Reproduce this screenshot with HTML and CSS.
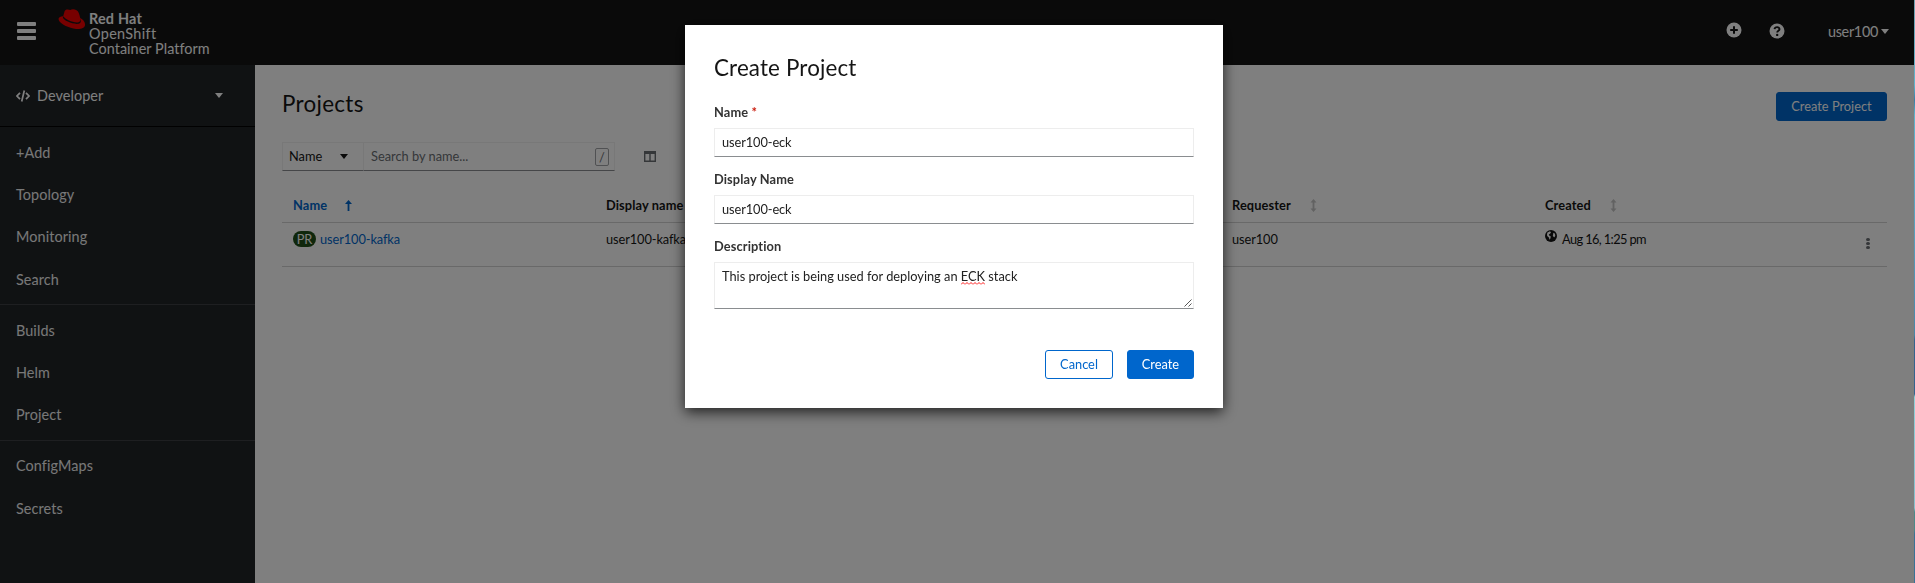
FILE: index.html
```html
<!DOCTYPE html>
<html lang="en">
<head>
<meta charset="utf-8">
<title>Projects</title>
<link rel="stylesheet" href="styles.css">
</head>
<body>
<div class="page">
  <header class="masthead">
    <div class="burger"><i></i><i></i><i></i></div>
    <div class="brand">
      <svg class="hat" viewBox="0 0 28 21" width="28" height="21">
        <path fill="#e00" d="M6.6 2.2C7.4.3 9.2.1 10.8.7l1.600.4C13.800 0 16.500.1 18.500 1.300c2 1.100 2.900 3.500 3.700 7.700 2.700 1.400 5 3.900 4.900 6.700-.2 3.500-4.600 4.600-9 4.200C11.400 19.200 1.600 15.300.6 10.600.2 8.500 2 7.400 5.200 7.300z"/>
        <path fill="#151515" d="M5.200 7.300C7.500 10.700 16 14.300 20.600 13.200c1.400-.4 2-1.300 1.600-4.200l.5 2.300c.6 2.700-1.200 3.600-3.800 3.600C13.300 14.800 5.200 11.300 4.900 8.600z"/>
      </svg>
      <div class="brand-text"><b>Red Hat</b><span class="os">OpenShift</span><span class="cp">Container Platform</span></div>
    </div>
    <div class="tools">
      <svg class="t-plus" viewBox="0 0 16 16" width="16" height="16"><circle cx="8" cy="8" r="7.500" fill="#fff"/><path d="M8 4.200v7.600M4.200 8h7.600" stroke="#151515" stroke-width="2"/></svg>
      <svg class="t-help" viewBox="0 0 16 16" width="16" height="16"><circle cx="8" cy="8" r="7.500" fill="#fff"/><path d="M5.500 6.200C5.900 3.500 10.500 3.400 10.500 6.200 10.500 7.800 8.200 7.800 8.200 9.500" fill="none" stroke="#151515" stroke-width="1.900"/><circle cx="8.200" cy="11.900" r="1.200" fill="#151515"/></svg>
      <span class="user">user100</span>
      <span class="caret"></span>
    </div>
  </header>
  <div class="body">
    <nav class="sidebar">
      <div class="perspective">
        <svg viewBox="0 0 14 12" width="14" height="12" fill="none" stroke="#fff" stroke-width="1.700"><path d="M4 2.800 1 6l3 3.200M10 2.800 13 6l-3 3.200M8.300.5 5.700 11.500"/></svg>
        <span>Developer</span>
        <span class="caret"></span>
      </div>
      <ul><li>+Add</li><li>Topology</li><li>Monitoring</li><li>Search</li></ul>
      <ul><li>Builds</li><li>Helm</li><li>Project</li></ul>
      <ul><li>ConfigMaps</li><li>Secrets</li></ul>
    </nav>
    <main class="content">
      <div class="title-row"><h1>Projects</h1><button class="btn primary">Create Project</button></div>
      <div class="toolbar">
        <div class="filter">Name<span class="caret"></span></div>
        <div class="search"><span>Search by name...</span><kbd>/</kbd></div>
        <svg class="columns" viewBox="0 0 12 11" width="12" height="11" fill="none" stroke="#6a6e73"><path stroke-width="1.400" d="M.7 1v9.300h10.600V1M6 3v7"/><path stroke-width="3" d="M0 1.500h12"/></svg>
      </div>
      <div class="row head">
        <div class="sorted">Name<svg class="arrow" viewBox="0 0 7 11" width="7" height="11"><path d="M3.500 0 7 4H4.400v7H2.600V4H0z" fill="#06c"/></svg></div>
        <div>Display name</div>
        <div></div>
        <div>Requester<svg class="sort" viewBox="0 0 7 13" width="7" height="13"><path d="M3.500 0 6.500 3.500H4.400v6h2.100L3.500 13 .5 9.500h2.100v-6H.5z" fill="#c4c4c4"/></svg></div>
        <div>Created<svg class="sort" viewBox="0 0 7 13" width="7" height="13"><path d="M3.500 0 6.500 3.500H4.400v6h2.100L3.500 13 .5 9.500h2.100v-6H.5z" fill="#c4c4c4"/></svg></div>
        <div></div>
      </div>
      <div class="row item">
        <div><span class="badge">PR</span><a class="digits">user100-kafka</a></div>
        <div class="digits">user100-kafka</div>
        <div></div>
        <div class="digits">user100</div>
        <div><svg class="globe" viewBox="0 0 12 12" width="12" height="12"><circle cx="6" cy="6" r="6" fill="#151515"/><path fill="#fff" d="M2.500 2.500 5 1.300 6 2.500 5 3.800 3.800 4.400 4.200 5.500 5.800 6.500 5.400 8.400 4.500 9.800 3.900 7.600 2.200 6 2 4zM8.300 2.800 9.800 3.500 10.300 5.500 9.500 7.200 8.600 7 7.800 5.500 8.200 4.200z"/></svg><span class="date">Aug 16, 1:25 pm</span></div>
        <div class="kebab"><i></i><i></i><i></i></div>
      </div>
    </main>
  </div>
</div>
<div class="backdrop">
  <section class="modal">
    <h2>Create Project</h2>
    <label>Name <em>*</em></label>
    <div class="input digits">user100-eck</div>
    <label>Display Name</label>
    <div class="input digits">user100-eck</div>
    <label>Description</label>
    <div class="input area">This project is being used for deploying an <span class="misspelt">ECK</span> stack
      <svg class="grip" viewBox="0 0 8 8" width="8" height="8" stroke="#444" stroke-width=".9"><path d="M.5 7.500 7.500.5M4.500 7.500 7.500 4.500"/></svg>
    </div>
    <div class="actions"><button class="btn secondary">Cancel</button><button class="btn primary">Create</button></div>
  </section>
</div>
<div class="edge"></div>
</body>
</html>
```
FILE: styles.css
```css
* { box-sizing: border-box; }
body {
  margin: 0;
  height: 583px;
  overflow: hidden;
  font: 12.8px/19px Lato, "Open Sans", sans-serif;
  color: #151515;
}
h1, h2, ul { margin: 0; padding: 0; font-weight: 400; list-style: none; }
h1, h2 { font-size: 22.4px; line-height: 29px; letter-spacing: .15px; }
h1 { letter-spacing: .3px; }
.digits { letter-spacing: -.09px; }
.page { height: 583px; display: flex; flex-direction: column; background: #fff; }
.caret { width: 0; height: 0; border: 4px solid transparent; border-top: 5px solid currentColor; border-bottom: 0; }

.masthead { height: 65px; flex: none; display: flex; background: #151515; color: #fff; padding: 0 26px 0 17px; }
.burger { width: 19px; margin-top: 22px; display: flex; flex-direction: column; gap: 3.500px; }
.burger i { height: 3.500px; border-radius: 1px; background: #fff; }
.brand { display: flex; margin-left: 22px; padding-top: 9px; }
.hat { flex: none; }
.brand-text { display: flex; flex-direction: column; margin: 2px 0 0 3px; font-size: 14.4px; line-height: 15px; }
.brand-text b { letter-spacing: .2px; }
.os { letter-spacing: .35px; }
.cp { letter-spacing: .05px; }
.tools { display: flex; margin-left: auto; color: #fff; }
.t-plus { margin-top: 22px; }
.t-help { margin: 23px 0 0 27px; }
.user { margin: 22px 3px 0 43px; font-size: 14.4px; line-height: 20px; letter-spacing: -.3px; }
.tools .caret { margin-top: 29px; border-width: 5px 4.500px 0; }

.body { flex: 1; display: flex; min-height: 0; }
.sidebar { width: 255px; flex: none; background: #212427; color: #fff; font-size: 14.4px; }
.perspective { height: 61px; display: flex; align-items: center; padding: 0 32px 0 16px; gap: 7px; letter-spacing: .08px; }
.perspective .caret { margin-left: auto; }
.sidebar ul { border-top: 1px solid #3c3f42; padding: 4.500px 0 3px; }
.perspective + ul { border-color: #030303; }
.sidebar li { height: 42.400px; line-height: 42.400px; padding-left: 16px; color: #f0f0f0; letter-spacing: .1px; }

.content { flex: 1; padding: 24px 28px 0 27px; }
.title-row { display: flex; justify-content: space-between; height: 53px; }
.title-row .btn { margin-top: 3px; }
.btn { height: 29px; padding: 0 14px 1px; border: 1px solid #06c; border-radius: 3px; font: 12.8px/1 Lato, sans-serif; }
.primary { background: #06c; color: #fff; }
.secondary { background: #fff; color: #06c; }
.title-row .btn { width: 111px; }
.toolbar { display: flex; align-items: center; height: 29px; }
.filter, .search { height: 29px; border: 1px solid #f0f0f0; border-bottom-color: #8a8d90; display: flex; align-items: center; justify-content: space-between; }
.filter { width: 81px; padding: 0 15px 0 6px; border-right: 0; }
.search { width: 252px; padding: 0 5px 0 7px; color: #6a6e73; }
kbd { width: 14px; height: 18px; border: 1px solid #a0a3a6; border-radius: 2px; font: 12.8px/16px Lato, sans-serif; text-align: center; }
.columns { margin-left: 29px; }
.row { display: grid; grid-template-columns: repeat(5, 313px) 1fr; padding-left: 11px; border-bottom: 1px solid #d2d2d2; }
.head { height: 52px; padding-top: 25px; font-weight: 700; letter-spacing: .12px; }
.head > div { display: flex; }
.sorted { color: #06c; }
.arrow { margin: 4px 0 0 18px; }
.sort { margin: 3px 0 0 19px; }
.item { height: 44px; padding-top: 7px; }
.item > div { display: flex; align-items: flex-start; }
.badge { width: 23px; height: 16px; margin: 1px 4px 0 0; border-radius: 8px; background: #1e4f18; color: #fff; line-height: 16px; text-align: center; }
.item a { color: #06c; }
.globe { margin: 0 5px 0 0; }
.date { letter-spacing: -.6px; }
.item .kebab { flex-direction: column; gap: 1px; padding: 8px 0 0 8px; }
.kebab i { width: 3.500px; height: 3px; border-radius: 50%; background: #6a6e73; }

.backdrop { position: fixed; inset: 0; padding: 25px 0 0 685px; background: rgba(0, 0, 0, .5); }
.modal { width: 538px; height: 383px; padding: 28px 29px 29px; display: flex; flex-direction: column; background: #fff; box-shadow: 0 4px 13px rgba(0, 0, 0, .75); }
.modal h2 { margin-bottom: 21px; }
.modal label { height: 19px; margin-bottom: 6px; font-weight: 700; letter-spacing: .12px; color: #333; }
.modal em { color: #c9190b; font-style: normal; }
.input { height: 29px; flex: none; margin-bottom: 13px; padding: 4px 7px; border: 1px solid #ededed; border-bottom-color: #8a8d90; color: #222; }
.area { position: relative; height: 47px; letter-spacing: 0; margin-bottom: 41px; }
.misspelt { padding-bottom: 1px; background: url("data:image/svg+xml,%3Csvg xmlns='http://www.w3.org/2000/svg' width='4' height='3'%3E%3Cpath d='M0 2.500 2 .5 4 2.500' fill='none' stroke='red' stroke-width='.9'/%3E%3C/svg%3E") repeat-x left bottom; }
.grip { position: absolute; right: 1px; bottom: 1px; }
.actions { display: flex; justify-content: flex-end; gap: 14px; }
.actions .btn { width: 67px; padding: 0 0 1px; }
.actions .secondary { width: 68px; }

/* sliver of desktop wallpaper beside the window */
.edge { position: fixed; top: 0; right: 0; width: 1px; height: 583px; background: linear-gradient(#6f9fae, #5fb4cc 85px, #3b7fa5 100px, #5fb4cc 115px, #5ba3be 220px, #4a87a8 335px, #35648f 340px, #35648f 394px, #8ed0d8 397px, #86c0cc 508px, #4c8a8a 512px, #4c8a8a 530px, #3a7397 534px, #3a7397); }
```
